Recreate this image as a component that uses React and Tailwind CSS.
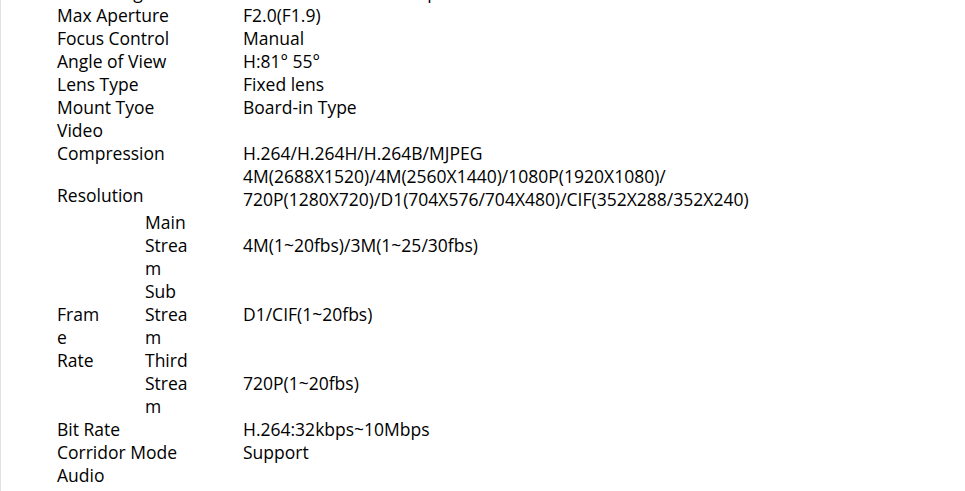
const rows = [
  ["Focal Length", "3.6mm/2.8mm/6mm optional"],
  ["Max Aperture", "F2.0(F1.9)"],
  ["Focus Control", "Manual"],
  ["Angle of View", "H:81° 55°"],
  ["Lens Type", "Fixed lens"],
  ["Mount Tyoe", "Board-in Type"],
  ["Video", ""],
  ["Compression", "H.264/H.264H/H.264B/MJPEG"],
]

const streams = [
  { name: ["Main", "Strea", "m"], value: "4M(1~20fbs)/3M(1~25/30fbs)" },
  { name: ["Sub", "Strea", "m"], value: "D1/CIF(1~20fbs)" },
  { name: ["Third", "Strea", "m"], value: "720P(1~20fbs)" },
]

const tail = [
  ["Bit Rate", "H.264:32kbps~10Mbps"],
  ["Corridor Mode", "Support"],
  ["Audio", ""],
]

function Row({ label, value }) {
  return (
    <div className="flex">
      <div className="w-[186px] shrink-0">{label}</div>
      <div>{value}</div>
    </div>
  )
}

export default function App() {
  return (
    <div
      className="h-[491px] w-full overflow-hidden bg-white border-l border-[#e2e2e2] text-[17.5px] leading-[23px] text-black"
      style={{ fontFamily: '"Open Sans", "Noto Sans", sans-serif' }}
    >
      <div className="-mt-[19px] pl-[56px]">
        {rows.map(([l, v]) => (
          <Row key={l} label={l} value={v} />
        ))}

        <div className="flex">
          <div className="w-[186px] shrink-0 self-end mb-[4px]">Resolution</div>
          <div>
            <div>4M(2688X1520)/4M(2560X1440)/1080P(1920X1080)/</div>
            <div>720P(1280X720)/D1(704X576/704X480)/CIF(352X288/352X240)</div>
          </div>
        </div>

        <div className="flex">
          <div className="w-[88px] shrink-0 pt-[92px]">
            <div>Fram</div>
            <div>e</div>
            <div>Rate</div>
          </div>
          <div>
            {streams.map((s) => (
              <div key={s.value} className="flex">
                <div className="w-[98px] shrink-0">
                  {s.name.map((n, i) => (
                    <div key={i}>{n}</div>
                  ))}
                </div>
                <div className="pt-[23px]">{s.value}</div>
              </div>
            ))}
          </div>
        </div>

        {tail.map(([l, v]) => (
          <Row key={l} label={l} value={v} />
        ))}
      </div>
    </div>
  )
}
